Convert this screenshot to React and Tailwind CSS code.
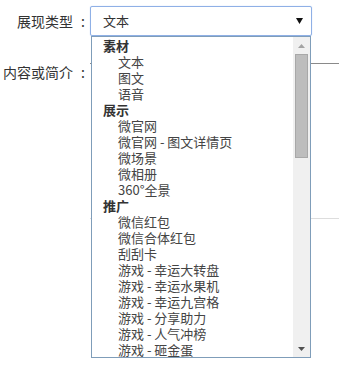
import React from "react";

const groups = [
  { label: "素材", items: ["文本", "图文", "语音"] },
  { label: "展示", items: ["微官网", "微官网 - 图文详情页", "微场景", "微相册", "360°全景"] },
  {
    label: "推广",
    items: [
      "微信红包",
      "微信合体红包",
      "刮刮卡",
      "游戏 - 幸运大转盘",
      "游戏 - 幸运水果机",
      "游戏 - 幸运九宫格",
      "游戏 - 分享助力",
      "游戏 - 人气冲榜",
      "游戏 - 砸金蛋",
    ],
  },
];

const font = { fontFamily: '"Noto Sans CJK SC", "Liberation Sans", sans-serif' };

function FieldLabel({ children, className }) {
  return (
    <label className={`w-[90px] shrink-0 flex justify-end text-[14px] whitespace-nowrap ${className}`}>
      <span>{children}</span>
      <span className="w-[17px] pl-[3px] text-center">:</span>
    </label>
  );
}

export default function App() {
  return (
    <div className="relative w-[339px] h-[381px] bg-white overflow-hidden text-[#333]" style={font}>
      {/* row 1 */}
      <div className="flex items-start pt-[6px]">
        <FieldLabel className="leading-[30px]">展现类型</FieldLabel>
        <div className="flex items-center justify-between w-[222px] h-[30px] border border-[#8fb0e6] rounded-[2px] pl-[12px] pr-[8px] text-[13px] shadow-[0_0_1px_#9fc0f0]">
          <span>文本</span>
          <svg width="7" height="6" viewBox="0 0 7 6">
            <path d="M0 0h7L3.5 6z" fill="#111" />
          </svg>
        </div>
      </div>

      {/* row 2 */}
      <div className="flex items-start mt-[27px]">
        <FieldLabel className="leading-[18px]">内容或简介</FieldLabel>
        <div className="flex-1 h-[156px] border-t border-[#8a8a8a] border-b border-b-[#dddddd]" />
      </div>

      {/* open dropdown */}
      <div className="absolute left-[91px] top-[36px] w-[220px] h-[322px] border border-[#7f9db9] bg-white flex">
        <ul className="flex-1 pt-px text-[13px] leading-[16px]">
          {groups.map((g) => (
            <React.Fragment key={g.label}>
              <li className="h-[16px] pl-[11px] font-bold text-[#333]">{g.label}</li>
              {g.items.map((it) => (
                <li key={it} className="h-[16px] pl-[26px] text-[#444] whitespace-nowrap">
                  {it}
                </li>
              ))}
            </React.Fragment>
          ))}
        </ul>
        <div className="w-[17px] h-full bg-[#f0f0f0] flex flex-col items-center">
          <div className="h-[17px] flex items-center justify-center">
            <svg width="7" height="4" viewBox="0 0 7 4">
              <path d="M3.5 0L7 4H0z" fill="#a3a3a3" />
            </svg>
          </div>
          <div className="w-[13px] h-[104px] bg-[#bdbdbd] border border-[#a8a8a8]" />
          <div className="flex-1" />
          <div className="h-[17px] flex items-center justify-center">
            <svg width="7" height="4" viewBox="0 0 7 4">
              <path d="M0 0h7L3.5 4z" fill="#505050" />
            </svg>
          </div>
        </div>
      </div>
    </div>
  );
}
